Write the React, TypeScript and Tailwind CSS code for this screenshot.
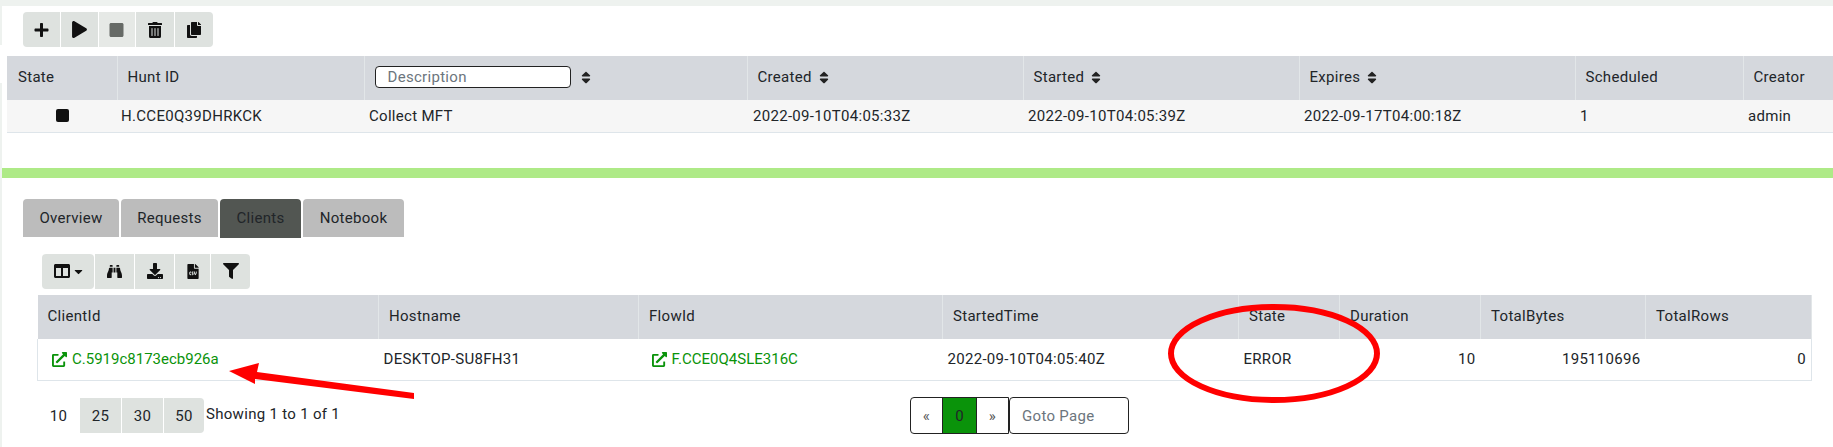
import { ReactNode } from 'react'
import {
  FaPlus,
  FaPlay,
  FaStop,
  FaTrashAlt,
  FaCopy,
  FaColumns,
  FaBinoculars,
  FaDownload,
  FaFileCsv,
  FaFilter,
  FaSort,
  FaExternalLinkAlt,
  FaCaretDown,
} from 'react-icons/fa'

const ToolButton = ({ children, className = '' }: { children: ReactNode; className?: string }) => (
  <button className={`flex h-full items-center justify-center text-[#111] ${className}`}>
    {children}
  </button>
)

const Th = ({ children, className = '' }: { children: ReactNode; className?: string }) => (
  <th className={`border-r border-[#e2e6e8] pb-[2px] pl-[10px] pr-[6px] text-left font-normal ${className}`}>{children}</th>
)

const SortLabel = ({ label }: { label: string }) => (
  <span className="flex items-center gap-[7px]">
    {label}
    <FaSort className="h-[15px] w-[10px] text-[#222]" />
  </span>
)

const ClientLink = ({ text }: { text: string }) => (
  <span className="flex items-center gap-[5px] text-[#0a930a]">
    <FaExternalLinkAlt className="h-[15px] w-[15px]" />
    <span className="tracking-normal">{text}</span>
  </span>
)

const huntCols = [110, 247, 383, 276, 276, 276, 168, 120]
const clientCols = [341, 260, 304, 296, 101, 141, 165, 166]

const App = () => {
  return (
    <div className="relative h-[447px] w-[1833px] overflow-hidden bg-white font-['Roboto',sans-serif] text-[15px] leading-[20px] tracking-[0.3px] text-[#212529]">
      <div className="h-[6px] bg-[#eef2ef]" />

      {/* Hunt toolbar */}
      <div className="ml-[23px] mt-[6px] flex h-[35px] w-[190px] gap-px overflow-hidden rounded-[4px]">
        <ToolButton className="w-[37px] bg-[#dee2df]"><FaPlus className="h-[16px] w-[15px]" /></ToolButton>
        <ToolButton className="w-[37px] bg-[#dee2df]"><FaPlay className="h-[17px] w-[15px]" /></ToolButton>
        <ToolButton className="w-[37px] bg-[#e6e9e6]"><FaStop className="h-[16px] w-[15px] text-[#666a66]" /></ToolButton>
        <ToolButton className="w-[38px] bg-[#dee2df]"><FaTrashAlt className="h-[16px] w-[14px]" /></ToolButton>
        <ToolButton className="w-[38px] bg-[#dee2df]"><FaCopy className="h-[16px] w-[14px]" /></ToolButton>
      </div>

      {/* Hunt table */}
      <div className="ml-[7px] mt-[9px] overflow-hidden">
        <table className="table-fixed border-collapse" style={{ width: huntCols.reduce((a, b) => a + b, 0) }}>
          <colgroup>
            {huntCols.map((w, i) => (
              <col key={i} style={{ width: w }} />
            ))}
          </colgroup>
          <thead>
            <tr className="h-[44px] bg-[#d5d8dd]">
              <Th className="pl-[11px]">State</Th>
              <Th>Hunt ID</Th>
              <Th className="pl-[9px]">
                <span className="flex items-center gap-[10px]">
                  <input
                    readOnly
                    placeholder="Description"
                    className="h-[22px] w-[196px] rounded-[4px] border border-[#222] bg-white px-[12px] text-[15px] tracking-[0.3px] placeholder:text-[#6c757d]"
                  />
                  <FaSort className="h-[15px] w-[10px] text-[#222]" />
                </span>
              </Th>
              <Th><SortLabel label="Created" /></Th>
              <Th><SortLabel label="Started" /></Th>
              <Th><SortLabel label="Expires" /></Th>
              <Th>Scheduled</Th>
              <Th>Creator</Th>
            </tr>
          </thead>
          <tbody>
            <tr className="h-[32px] border-b border-[#dee5ea] bg-[#f6f6f6]">
              <td className="px-[5px]">
                <span className="ml-[44px] block h-[13px] w-[13px] rounded-[2px] bg-[#111]" />
              </td>
              <td className="px-[4px]">H.CCE0Q39DHRKCK</td>
              <td className="px-[5px]">Collect MFT</td>
              <td className="px-[6px]">2022-09-10T04:05:33Z</td>
              <td className="px-[5px]">2022-09-10T04:05:39Z</td>
              <td className="px-[5px]">2022-09-17T04:00:18Z</td>
              <td className="px-[5px]">1</td>
              <td className="px-[5px]">admin</td>
            </tr>
          </tbody>
        </table>
      </div>

      <div className="ml-[2px] mt-[35px] h-[10px] bg-[#aeea87]" />

      {/* Tabs */}
      <div className="ml-[23px] mt-[21px] flex h-[38px] items-start gap-[2px]">
        <div className="flex h-[38px] w-[96px] items-center justify-center rounded-t-[4px] bg-[#bcbcbc]">Overview</div>
        <div className="flex h-[38px] w-[97px] items-center justify-center rounded-t-[4px] bg-[#bcbcbc]">Requests</div>
        <div className="flex h-[39px] w-[81px] items-center justify-center rounded-t-[4px] bg-[#525652]">Clients</div>
        <div className="flex h-[38px] w-[101px] items-center justify-center rounded-t-[4px] bg-[#bcbcbc]">Notebook</div>
      </div>

      {/* Client toolbar */}
      <div className="ml-[42px] mt-[17px] flex h-[35px] gap-px">
        <ToolButton className="w-[52px] gap-[4px] rounded-[4px] bg-[#dee2df]">
          <FaColumns className="h-[16px] w-[16px]" />
          <FaCaretDown className="h-[13px] w-[9px]" />
        </ToolButton>
        <ToolButton className="w-[39px] bg-[#dee2df]"><FaBinoculars className="h-[15px] w-[15px]" /></ToolButton>
        <ToolButton className="w-[39px] bg-[#dee2df]"><FaDownload className="h-[16px] w-[16px]" /></ToolButton>
        <ToolButton className="w-[35px] bg-[#dee2df]"><FaFileCsv className="h-[15px] w-[12px]" /></ToolButton>
        <ToolButton className="w-[39px] rounded-r-[4px] bg-[#dee2df]"><FaFilter className="h-[16px] w-[16px]" /></ToolButton>
      </div>

      {/* Client table */}
      <table className="ml-[37px] mt-[6px] table-fixed border-collapse" style={{ width: clientCols.reduce((a, b) => a + b, 0) }}>
        <colgroup>
          {clientCols.map((w, i) => (
            <col key={i} style={{ width: w }} />
          ))}
        </colgroup>
        <thead>
          <tr className="h-[44px] bg-[#d5d8dd]">
            <Th>ClientId</Th>
            <Th>Hostname</Th>
            <Th>FlowId</Th>
            <Th>StartedTime</Th>
            <Th>State</Th>
            <Th>Duration</Th>
            <Th>TotalBytes</Th>
            <Th>TotalRows</Th>
          </tr>
        </thead>
        <tbody>
          <tr className="h-[42px] border-x border-b border-[#dee5ea]">
            <td className="pl-[14px]"><ClientLink text="C.5919c8173ecb926a" /></td>
            <td className="px-[5px]">DESKTOP-SU8FH31</td>
            <td className="pl-[13px]"><ClientLink text="F.CCE0Q4SLE316C" /></td>
            <td className="px-[5px]">2022-09-10T04:05:40Z</td>
            <td className="px-[5px]">ERROR</td>
            <td className="px-[5px] text-right">10</td>
            <td className="px-[5px] text-right">195110696</td>
            <td className="px-[5px] text-right">0</td>
          </tr>
        </tbody>
      </table>

      {/* Footer */}
      <div className="mt-[16px] flex h-[37px] items-center">
        <div className="ml-[42px] flex h-[35px] items-center">
          <span className="w-[34px] pr-[1px] text-center">10</span>
          <span className="w-[4px]" />
          <div className="flex h-full gap-px overflow-hidden rounded-r-[4px]">
            <span className="flex w-[41px] items-center justify-center bg-[#dee2df]">25</span>
            <span className="flex w-[41px] items-center justify-center bg-[#dee2df]">30</span>
            <span className="flex w-[40px] items-center justify-center bg-[#dee2df]">50</span>
          </div>
          <span className="mb-[3px] ml-[2px]">Showing 1 to 1 of 1</span>
        </div>
        <div className="ml-[570px] flex h-[37px]">
          <div className="flex w-[99px] overflow-hidden rounded-l-[4px] border border-[#222]">
            <span className="flex w-[31px] items-center justify-center text-[#555]">«</span>
            <span className="flex w-[35px] items-center justify-center border-x border-[#222] bg-[#0a930a]">0</span>
            <span className="flex flex-1 items-center justify-center text-[#555]">»</span>
          </div>
          <input
            readOnly
            placeholder="Goto Page"
            className="h-[37px] w-[120px] rounded-[4px] border border-[#222] px-[12px] tracking-[0.3px] placeholder:text-[#6c757d]"
          />
        </div>
      </div>

      {/* Page gutter and red annotations, drawn over the screenshot */}
      <div className="absolute left-0 top-0 h-[45px] w-[2px] bg-[#eef2ef]" />
      <div className="absolute bottom-0 left-0 top-[83px] w-[2px] bg-[#eef2ef]" />
      <svg className="pointer-events-none absolute left-0 top-0" width="1833" height="447">
        <ellipse cx="1274" cy="353.5" rx="103" ry="46.5" fill="none" stroke="#ff0000" strokeWidth="6" />
        <polygon points="229,371 259,363 257,372 414,393 414,399 255,379 255,384" fill="#ff0000" />
      </svg>
    </div>
  )
}

export default App
